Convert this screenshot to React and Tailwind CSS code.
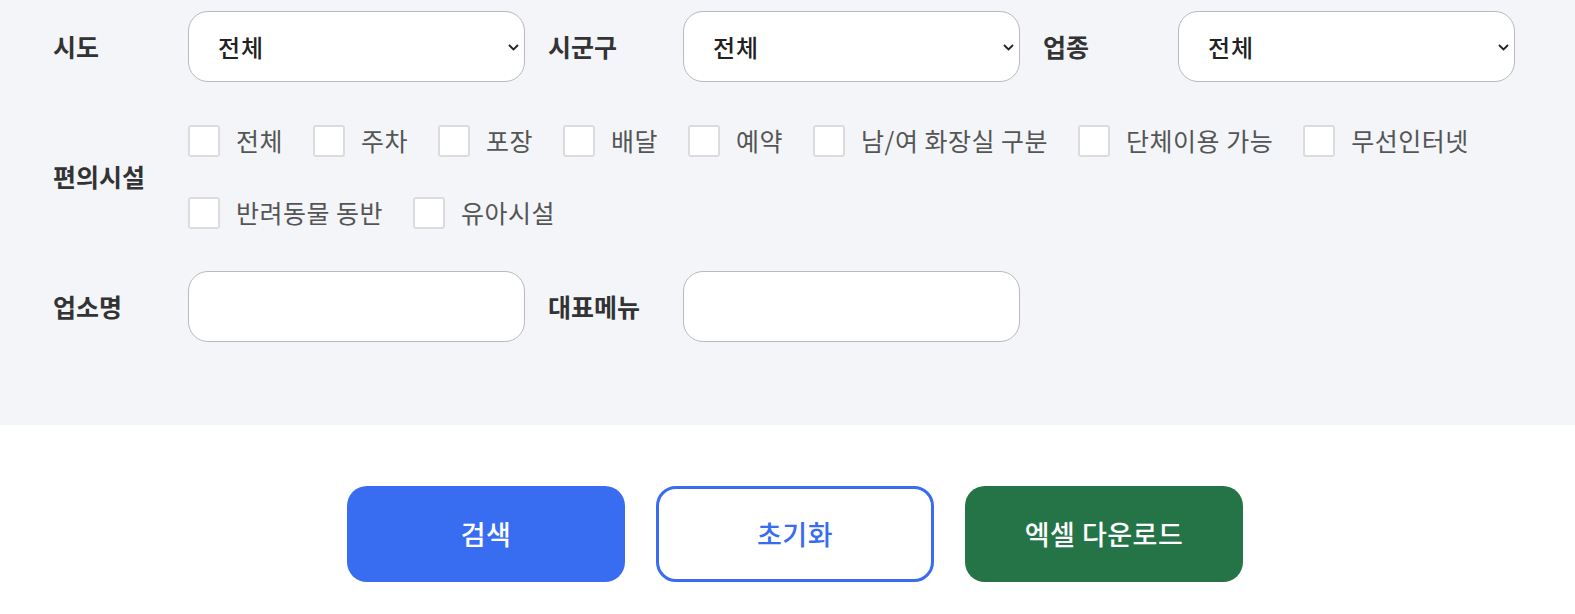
import React from 'react';

const FONT = { fontFamily: '"Noto Sans CJK KR", "Noto Sans", sans-serif' };

const amenities = [
  ['전체', '주차', '포장', '배달', '예약', '남/여 화장실 구분', '단체이용 가능', '무선인터넷'],
  ['반려동물 동반', '유아시설'],
];

function Label({ children }) {
  return (
    <div className="w-[135px] shrink-0 text-[25px] font-bold text-[#333]">
      {children}
    </div>
  );
}

function Select() {
  return (
    <div className="relative w-[337px] h-[71px] shrink-0">
      <select
        className="appearance-none w-full h-full bg-white border border-[#b9b9bf] rounded-[20px] pl-[29px] pr-10 text-[24px] font-medium text-[#222] tracking-[1px] outline-none"
        defaultValue="all"
      >
        <option value="all">전체</option>
      </select>
      {/* dropdown chevron */}
      <svg
        className="absolute right-[6px] top-1/2 -translate-y-1/2 pointer-events-none"
        width="11"
        height="8"
        viewBox="0 0 11 8"
        fill="none"
      >
        <path d="M1 2L5.5 6.5L10 2" stroke="#222" strokeWidth="1.8" />
      </svg>
    </div>
  );
}

function TextInput() {
  return (
    <input
      type="text"
      className="w-[337px] h-[71px] shrink-0 bg-white border border-[#b9b9bf] rounded-[20px] px-[30px] text-[24px] outline-none"
    />
  );
}

export default function App() {
  return (
    <div className="w-full min-h-[614px] bg-white" style={FONT}>
      <div className="bg-[#f3f5f9] h-[425px] pl-[53px] pt-[11px]">
        <div className="flex items-center">
          <Label>시도</Label>
          <Select />
          <div className="w-[23px]" />
          <Label>시군구</Label>
          <Select />
          <div className="w-[23px]" />
          <Label>업종</Label>
          <Select />
        </div>

        <div className="flex items-center mt-[43px]">
          <Label>편의시설</Label>
          <div className="flex flex-col gap-[40px]">
            {amenities.map((row, i) => (
              <div key={i} className="flex items-center">
                {row.map((name) => (
                  <label key={name} className="flex items-center mr-[30px] h-[32px]">
                    <span className="w-[32px] h-[32px] bg-white border-2 border-[#dcdcde] rounded-[3px] shrink-0" />
                    <span className="ml-[16px] text-[25px] text-[#555] tracking-[0.5px]">{name}</span>
                  </label>
                ))}
              </div>
            ))}
          </div>
        </div>

        <div className="flex items-center mt-[42px]">
          <Label>업소명</Label>
          <TextInput />
          <div className="w-[23px]" />
          <Label>대표메뉴</Label>
          <TextInput />
        </div>
      </div>

      <div className="flex justify-center gap-[31px] pt-[61px] pl-[15px]">
        <button className="w-[278px] h-[96px] rounded-[20px] bg-[#386df1] text-white text-[27px] font-medium tracking-[0.5px]">
          검색
        </button>
        <button className="w-[278px] h-[96px] rounded-[20px] bg-white border-[3px] border-[#386df1] text-[#386df1] text-[27px] font-medium tracking-[0.5px]">
          초기화
        </button>
        <button className="w-[278px] h-[96px] rounded-[20px] bg-[#247447] text-white text-[27px] font-medium tracking-[0.5px]">
          엑셀 다운로드
        </button>
      </div>
    </div>
  );
}
